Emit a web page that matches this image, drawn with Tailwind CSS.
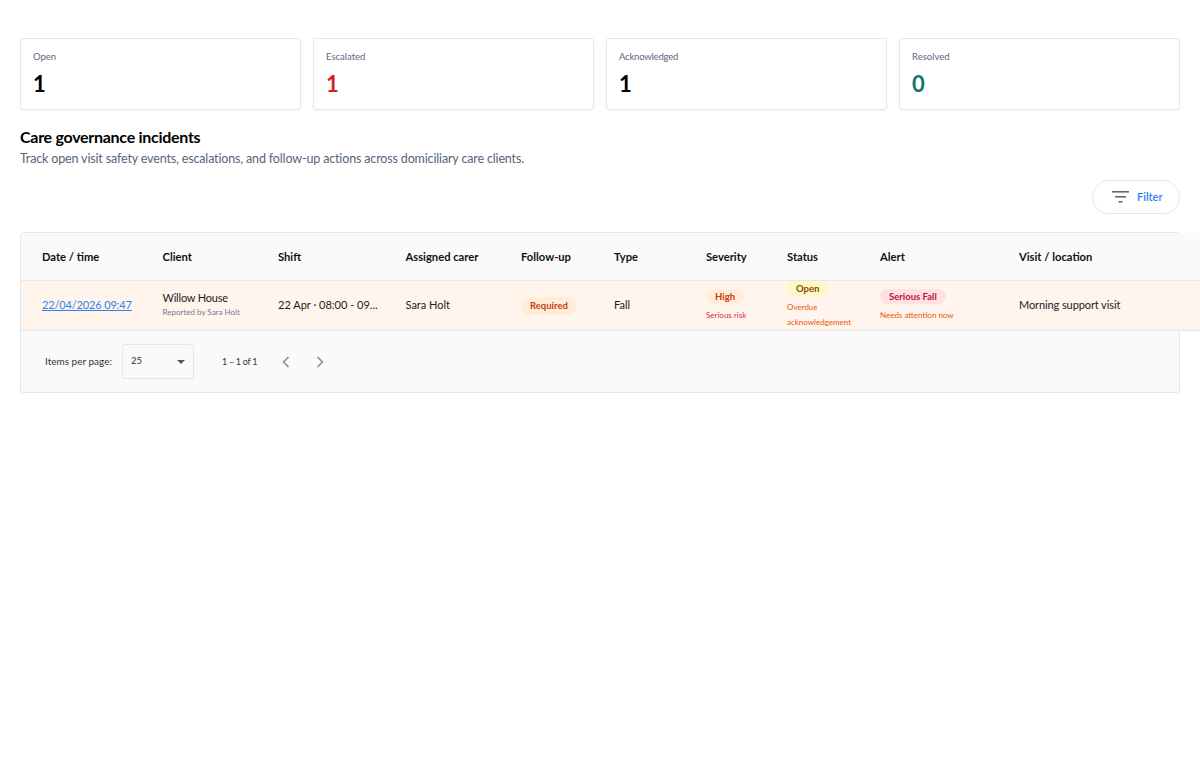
<!DOCTYPE html>
<html lang="en">
<head>
<meta charset="utf-8">
<title>Care governance incidents</title>
<script src="https://cdn.jsdelivr.net/npm/@tailwindcss/browser@4"></script>
</head>
<body class="bg-white font-['Lato',sans-serif] text-[#1a1a1a] overflow-hidden h-[771px]">
<main class="px-5 pt-[38px]">

    <!-- Summary cards -->
    <section class="grid grid-cols-4 gap-3">
        <div class="h-[72px] border border-[#e2e8f0] rounded-[3px] px-3 pt-[11px] bg-white shadow-[0_1px_2px_rgba(15,23,42,0.04)]">
            <div class="text-[9.5px] leading-[14px] text-[#5b6880]">Open</div>
            <div class="text-[22px] leading-7 mt-[6px] font-bold text-black">1</div>
        </div>
        <div class="h-[72px] border border-[#e2e8f0] rounded-[3px] px-3 pt-[11px] bg-white shadow-[0_1px_2px_rgba(15,23,42,0.04)]">
            <div class="text-[9.5px] leading-[14px] text-[#5b6880]">Escalated</div>
            <div class="text-[22px] leading-7 mt-[6px] font-bold text-[#dc1c1c]">1</div>
        </div>
        <div class="h-[72px] border border-[#e2e8f0] rounded-[3px] px-3 pt-[11px] bg-white shadow-[0_1px_2px_rgba(15,23,42,0.04)]">
            <div class="text-[9.5px] leading-[14px] tracking-[-0.2px] text-[#5b6880]">Acknowledged</div>
            <div class="text-[22px] leading-7 mt-[6px] font-bold text-black">1</div>
        </div>
        <div class="h-[72px] border border-[#e2e8f0] rounded-[3px] px-3 pt-[11px] bg-white shadow-[0_1px_2px_rgba(15,23,42,0.04)]">
            <div class="text-[9.5px] leading-[14px] text-[#5b6880]">Resolved</div>
            <div class="text-[22px] leading-7 mt-[6px] font-bold text-[#0f766e]">0</div>
        </div>
    </section>

    <!-- Heading -->
    <h1 class="mt-[17px] text-[16px] leading-5 font-bold tracking-[-0.28px] text-black">Care governance incidents</h1>
    <p class="mt-[3px] text-[12.5px] leading-[18px] tracking-[-0.15px] text-[#56647c]">Track open visit safety events, escalations, and follow-up actions across domiciliary care clients.</p>

    <!-- Filter -->
    <div class="flex justify-end mt-[12px]">
        <button class="flex items-center gap-[8px] w-[88px] h-[34px] pl-[19px] border border-[#e2e8f0] rounded-full bg-white">
            <svg class="w-[17px] h-[12px]" viewBox="0 0 17 12" fill="#5b6880"><rect x="0" y="0" width="17" height="1.6"/><rect x="3" y="5" width="11" height="1.6"/><rect x="6.5" y="10" width="4" height="1.6"/></svg>
            <span class="text-[11px] font-semibold text-[#2f80ed]">Filter</span>
        </button>
    </div>

    <!-- Incidents table -->
    <section class="mt-[18px] h-[161px] border border-[#e2e8f0] rounded-[3px] bg-[#fafafa]">
        <div class="w-[1179px] grid grid-cols-[120.5px_115.5px_127.5px_115.5px_93px_92px_81px_93px_139px_1fr] pl-[21px] pt-[2px] h-[48px] items-center border-b border-[#e2e8f0] bg-[#fafafa] text-[11.2px] font-bold text-[#111]">
            <div>Date / time</div>
            <div>Client</div>
            <div>Shift</div>
            <div>Assigned carer</div>
            <div>Follow-up</div>
            <div>Type</div>
            <div>Severity</div>
            <div>Status</div>
            <div>Alert</div>
            <div>Visit / location</div>
        </div>
        <div class="w-[1179px] grid grid-cols-[120.5px_115.5px_127.5px_115.5px_93px_92px_81px_93px_139px_1fr] pl-[21px] pb-[2px] h-[50px] items-center border-b border-[#e2e8f0] bg-[#fff5ec] text-[11px] text-[#222]">
            <div><a href="#" class="underline tracking-[-0.15px] text-[#2f80ed]">22/04/2026 09:47</a></div>
            <div class="-mt-[4px]">
                <div class="leading-[16px] tracking-[-0.2px]">Willow House</div>
                <div class="text-[8px] leading-[12px] text-[#6f7b92]">Reported by Sara Holt</div>
            </div>
            <div>22 Apr · 08:00 - 09...</div>
            <div>Sara Holt</div>
            <div><span class="inline-block px-[9px] h-[18px] leading-[18px] rounded-full bg-[#ffedd9] text-[9.5px] font-bold text-[#c2410c]">Required</span></div>
            <div>Fall</div>
            <div class="-mt-[2px]">
                <span class="block w-fit px-[9px] h-[15px] leading-[15px] rounded-full bg-[#ffedd9] text-[9.5px] font-bold text-[#c2410c]">High</span>
                <div class="text-[8px] leading-[12px] mt-[5px] text-[#e11d48]">Serious risk</div>
            </div>
            <div>
                <span class="block w-fit px-[9px] h-[15px] leading-[15px] rounded-full bg-[#fef9c3] text-[9.5px] font-bold text-[#854d0e]">Open</span>
                <div class="text-[8px] leading-[15px] mt-[4px] text-[#ea580c]">Overdue<br>acknowledgement</div>
            </div>
            <div class="-mt-[2px]">
                <span class="block w-fit px-[9px] h-[15px] leading-[15px] rounded-full bg-[#fee2e2] text-[9.5px] font-bold text-[#be123c]">Serious Fall</span>
                <div class="text-[8px] leading-[12px] mt-[5px] text-[#ea580c]">Needs attention now</div>
            </div>
            <div class="tracking-[-0.1px]">Morning support visit</div>
        </div>

        <!-- Pagination -->
        <div class="flex items-center h-[61px] pl-[24px]">
            <span class="text-[10px] text-[#333] w-[77px]">Items per page:</span>
            <div class="w-[72px] h-[35px] border border-[#e2e8f0] rounded-[3px] flex items-center justify-between pl-[8px] pr-[8px] text-[9.5px] text-[#333]">
                <span>25</span>
                <span class="w-0 h-0 border-x-[4px] border-x-transparent border-t-[4.5px] border-t-[#555]"></span>
            </div>
            <span class="ml-[28px] text-[9px] tracking-[-0.3px] text-[#333] w-[56px]">1 – 1 of 1</span>
            <svg class="w-[8px] h-[12px] ml-[4px]" viewBox="0 0 8 12" fill="none" stroke="#8a8a8a" stroke-width="1.5"><path d="M6.5 1 L1.5 6 L6.5 11"/></svg>
            <svg class="w-[8px] h-[12px] ml-[26px]" viewBox="0 0 8 12" fill="none" stroke="#8a8a8a" stroke-width="1.5"><path d="M1.5 1 L6.5 6 L1.5 11"/></svg>
        </div>
    </section>
</main>
</body>
</html>
